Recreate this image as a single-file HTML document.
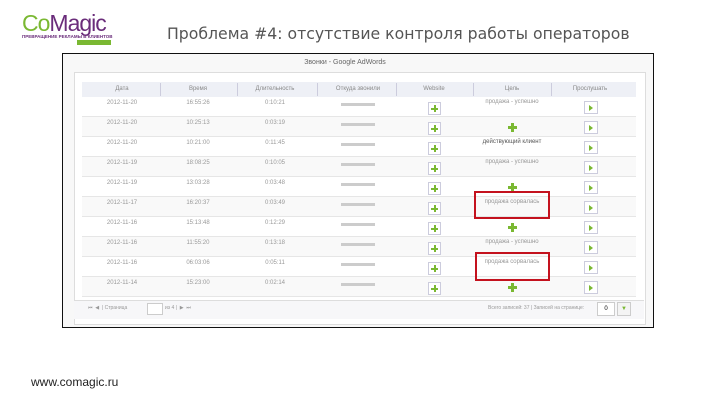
<!DOCTYPE html>
<html><head><meta charset="utf-8"><style>
body{margin:0;width:720px;height:405px;background:#fff;position:relative;overflow:hidden;font-family:"Liberation Sans","DejaVu Sans",sans-serif}
.a{position:absolute}
.t{font-size:6px;color:#999;text-align:center;position:absolute;white-space:nowrap}
.pl{position:absolute;width:11px;height:11px;border:1px solid #ccd;background:#fff}
.pl:before{content:"";position:absolute;left:2px;top:5px;width:7px;height:2px;background:#7ab832}
.pl:after{content:"";position:absolute;left:5px;top:2px;width:2px;height:7px;background:#7ab832}
.gp{position:absolute;width:9px;height:9px}
.gp:before{content:"";position:absolute;left:0;top:3px;width:9px;height:3px;background:#7ab832}
.gp:after{content:"";position:absolute;left:3px;top:0;width:3px;height:9px;background:#7ab832}
.pb{position:absolute;width:12px;height:11px;border:1px solid #ccd;background:#fff}
.pb:before{content:"";position:absolute;left:4px;top:3px;border-left:4px solid #7ab832;border-top:3px solid transparent;border-bottom:3px solid transparent}
.rb{position:absolute;border:2px solid #c4121e}
</style></head><body>
<div class="a" style="left:22px;top:10px;font-size:23px;color:#7ab832;letter-spacing:-1px">Co<span style="color:#6a2c7a">Magic</span></div>
<div class="a" style="left:22px;top:34px;font-size:4.5px;color:#6a2c7a;font-weight:bold;white-space:nowrap">ПРЕВРАЩЕНИЕ РЕКЛАМЫ В КЛИЕНТОВ</div>
<div class="a" style="left:77px;top:40px;width:34px;height:5px;background:#7ab832"></div>
<div class="a" style="left:167px;top:24px;font-family:'DejaVu Sans',sans-serif;font-size:15.7px;color:#555;white-space:nowrap">Проблема #4: отсутствие контроля работы операторов</div>
<div class="a" style="left:62px;top:53px;width:590px;height:273px;border:1.5px solid #111;background:#f8f8f8"></div>
<div class="a" style="left:74px;top:72px;width:570px;height:251px;border:1px solid #ddd;background:#fff"></div>
<div class="t" style="left:250px;top:59px;width:190px;font-size:7px;color:#666">Звонки - Google AdWords</div>
<div class="a" style="left:82px;top:82px;width:554px;height:15px;background:#eef0f6;border-bottom:1px solid #dde"></div>
<div id="tb"></div>
<div class="a" style="left:74px;top:300px;width:570px;height:18px;border-top:1px solid #ddd;background:#f7f7f9"></div>
<div class="t" style="left:88px;top:305px;text-align:left;font-size:5px">⏮ &nbsp;◀ &nbsp;| Страница</div>
<div class="a" style="left:147px;top:303px;width:14px;height:10px;border:1px solid #ccc;background:#fff"></div>
<div class="t" style="left:165px;top:305px;text-align:left;font-size:5px">из 4 | &nbsp;▶ &nbsp;⏭</div>
<div class="t" style="left:488px;top:305px;text-align:left;font-size:5px">Всего записей: 37 | Записей на странице:</div>
<div class="a" style="left:597px;top:302px;width:16px;height:12px;border:1px solid #ccc;background:#fff;font-size:6px;text-align:center;line-height:12px">0</div>
<div class="a" style="left:617px;top:302px;width:12px;height:12px;border:1px solid #ccc;background:#f4f4f4;font-size:6px;color:#7ab832;text-align:center;line-height:12px">▼</div>
<div class="a" style="left:31px;top:375px;font-size:12px;color:#222">www.comagic.ru</div>
<div class="rb" style="left:474px;top:191px;width:72px;height:24px"></div>
<div class="rb" style="left:475px;top:252px;width:71px;height:25px"></div>
<script>
var cols=[122,198,275,358,434,512,590],hd=["Дата","Время","Длительность","Откуда звонили","Website","Цель","Прослушать"];
var d=["2012-11-20","2012-11-20","2012-11-20","2012-11-19","2012-11-19","2012-11-17","2012-11-16","2012-11-16","2012-11-16","2012-11-14"];
var tm=["16:55:26","10:25:13","10:21:00","18:08:25","13:03:28","16:20:37","15:13:48","11:55:20","06:03:06","15:23:00"];
var du=["0:10:21","0:03:19","0:11:45","0:10:05","0:03:48","0:03:49","0:12:29","0:13:18","0:05:11","0:02:14"];
var g=["продажа - успешно","+","действующий клиент","продажа - успешно","+","продажа сорвалась","+","продажа - успешно","продажа сорвалась","+"];
var h="";
for(var i=0;i<7;i++){h+='<div class="t" style="left:'+(cols[i]-40)+'px;top:86px;width:80px;color:#888">'+hd[i]+'</div>';if(i)h+='<div class="a" style="left:'+((cols[i]+cols[i-1])/2)+'px;top:83px;width:1px;height:13px;background:#ccd"></div>';}
for(var r=0;r<10;r++){var y=97+r*20;
h+='<div class="a" style="left:82px;top:'+y+'px;width:554px;height:19px;border-bottom:1px solid #e6e6e6;background:'+(r%2?'#f9f9f9':'#fff')+'"></div>';
h+='<div class="t" style="left:82px;top:'+(y+3)+'px;width:80px">'+d[r]+'</div>';
h+='<div class="t" style="left:158px;top:'+(y+3)+'px;width:80px">'+tm[r]+'</div>';
h+='<div class="t" style="left:235px;top:'+(y+3)+'px;width:80px">'+du[r]+'</div>';
h+='<div class="a" style="left:341px;top:'+(y+6)+'px;width:34px;height:3px;background:#ccc"></div>';
h+='<div class="pl" style="left:428px;top:'+(y+5)+'px"></div>';
h+='<div class="pb" style="left:584px;top:'+(y+4)+'px"></div>';
if(g[r]=="+")h+='<div class="gp" style="left:508px;top:'+(y+6)+'px"></div>';
else h+='<div class="t" style="left:462px;top:'+(y+2)+'px;width:100px;color:'+(r==2?'#555':'#999')+'">'+g[r]+'</div>';}
document.getElementById("tb").innerHTML=h;
</script>
</body></html>
